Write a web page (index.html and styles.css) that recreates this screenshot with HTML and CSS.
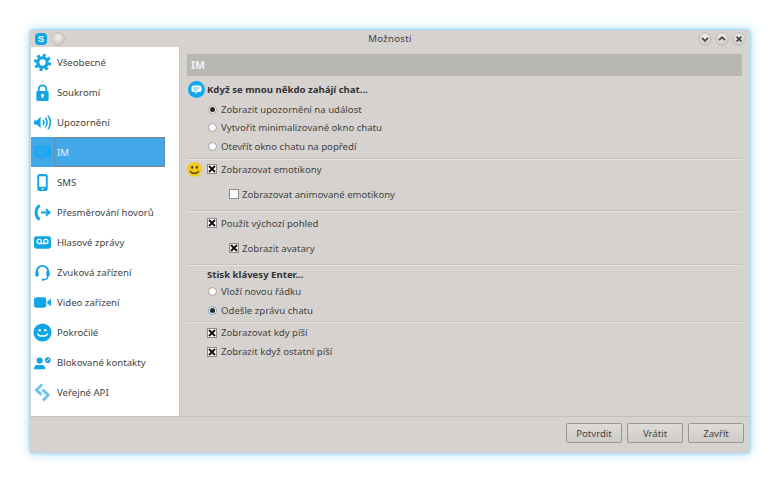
FILE: index.html
```html
<!DOCTYPE html>
<html lang="cs">
<head>
  <meta charset="UTF-8">
  <title>Možnosti</title>
  <link rel="stylesheet" href="styles.css">
</head>
<body>
  <div class="window">
    <div class="titlebar">
      <div class="title-left">
        <svg class="skype-logo" viewBox="0 0 12 12"><rect width="12" height="12" rx="4" fill="#12a5e6"/><text x="6" y="9.4" text-anchor="middle" class="skype-s">S</text></svg>
        <span class="win-btn"></span>
      </div>
      <div class="title-text">Možnosti</div>
      <div class="title-right">
        <span class="win-btn"><svg viewBox="0 0 10 10"><path d="M2.5 4l2.5 2.5L7.5 4" class="win-glyph"/></svg></span>
        <span class="win-btn"><svg viewBox="0 0 10 10"><path d="M2.5 6L5 3.5 7.5 6" class="win-glyph"/></svg></span>
        <span class="win-btn"><svg viewBox="0 0 10 10"><path d="M3 3l4 4M7 3l-4 4" class="win-glyph"/></svg></span>
      </div>
    </div>

    <div class="main">
      <div class="sidebar">
        <div class="nav-item">
          <svg class="nav-icon" viewBox="0 0 20 20"><circle cx="10" cy="10" r="7.6" class="gear-teeth"/><circle cx="10" cy="10" r="5" class="gear-ring"/></svg>
          <span>Všeobecné</span>
        </div>
        <div class="nav-item">
          <svg class="nav-icon" viewBox="0 0 20 20"><path d="M6 9V6.5a4 4 0 0 1 8 0V9" class="line" stroke-width="2"/><rect x="3.5" y="8.5" width="13" height="10.5" rx="1.5" class="fill"/><circle cx="10" cy="13" r="1.6" fill="#fff"/><rect x="9.3" y="13" width="1.4" height="3" fill="#fff"/></svg>
          <span>Soukromí</span>
        </div>
        <div class="nav-item">
          <svg class="nav-icon" viewBox="0 0 20 20"><path d="M1 8h3l4-4v12l-4-4H1z" class="fill"/><path d="M10.5 7.5a4 4 0 0 1 0 5M13 5a8 8 0 0 1 0 10M15.800 3a11 11 0 0 1 0 14" class="line" stroke-width="1.700"/></svg>
          <span>Upozornění</span>
        </div>
        <div class="nav-item selected">
          <svg class="nav-icon" viewBox="0 0 20 20"><path d="M4 3h12a3 3 0 0 1 3 3v6a3 3 0 0 1-3 3h-4l-3 3v-3H4a3 3 0 0 1-3-3V6a3 3 0 0 1 3-3z" class="fill"/><path d="M5 7.500h10M5 10.500h7" stroke="#48ace8" stroke-width="1"/></svg>
          <span class="focus-box">IM</span>
        </div>
        <div class="nav-item">
          <svg class="nav-icon" viewBox="0 0 20 20"><rect x="4.500" y="1" width="11" height="18" rx="2.500" class="fill"/><rect x="6.500" y="3.500" width="7" height="11" fill="#fff"/><circle cx="10" cy="16.700" r="1" fill="#fff"/></svg>
          <span>SMS</span>
        </div>
        <div class="nav-item">
          <svg class="nav-icon" viewBox="0 0 20 20"><path d="M7 2.500C2 6 2 14 7 17.500" class="line" stroke-width="3.200"/><path d="M8.500 10H17M13.500 6.500L17.500 10l-4 3.500" class="line" stroke-width="2"/></svg>
          <span>Přesměrování hovorů</span>
        </div>
        <div class="nav-item">
          <svg class="nav-icon" viewBox="0 0 20 20"><rect x="1" y="3.500" width="18" height="13" rx="2.500" class="fill"/><circle cx="6.500" cy="9" r="2.200" fill="none" stroke="#fff" stroke-width="1.300"/><circle cx="13.500" cy="9" r="2.200" fill="none" stroke="#fff" stroke-width="1.300"/><path d="M6.500 11.200h7" stroke="#fff" stroke-width="1.300"/></svg>
          <span>Hlasové zprávy</span>
        </div>
        <div class="nav-item">
          <svg class="nav-icon" viewBox="0 0 20 20"><path d="M4 12V9a6 6 0 0 1 12 0v3" class="line" stroke-width="2"/><rect x="2.500" y="8.500" width="3.500" height="6" rx="1.500" class="fill"/><rect x="14" y="8.500" width="3.500" height="6" rx="1.500" class="fill"/><path d="M15.500 14c0 2.500-2 3.500-4 3.500" class="line" stroke-width="1.500"/><circle cx="10.500" cy="17.500" r="1.300" class="fill"/></svg>
          <span>Zvuková zařízení</span>
        </div>
        <div class="nav-item">
          <svg class="nav-icon" viewBox="0 0 20 20"><rect x="1" y="4.500" width="13" height="11" rx="2.500" class="fill"/><path d="M15 9l4-3v8l-4-3z" class="fill"/></svg>
          <span>Video zařízení</span>
        </div>
        <div class="nav-item">
          <svg class="nav-icon" viewBox="0 0 20 20"><circle cx="10" cy="10" r="9.500" class="fill"/><circle cx="7" cy="7.500" r="1.300" fill="#fff"/><circle cx="13" cy="7.500" r="1.300" fill="#fff"/><path d="M5 11.500c1 3 9 3 10 0" fill="none" stroke="#fff" stroke-width="1.500" stroke-linecap="round"/></svg>
          <span>Pokročilé</span>
        </div>
        <div class="nav-item">
          <svg class="nav-icon" viewBox="0 0 20 20"><circle cx="7" cy="8" r="3.200" class="fill"/><path d="M1 17c0-3.500 2-4.500 3.500-4.500h5c1.500 0 3.500 1 3.500 4.500z" class="fill"/><circle cx="15.500" cy="7.500" r="3" class="fill"/><path d="M14 9l3-3" stroke="#fff" stroke-width="1"/></svg>
          <span>Blokované kontakty</span>
        </div>
        <div class="nav-item">
          <svg class="nav-icon" viewBox="0 0 20 20"><path d="M9.500 1.500L3.500 7.500l5.500 5" fill="none" stroke="#6cc5f2" stroke-width="3"/><path d="M10 7l6 5.500-5.500 6" fill="none" stroke="#6cc5f2" stroke-width="3"/></svg>
          <span>Veřejné API</span>
        </div>
      </div>

      <div class="content">
        <div class="page-head">IM</div>

        <div class="heading-row">
          <svg class="chat-icon" viewBox="0 0 17 17"><circle cx="8.500" cy="8.500" r="8.500" fill="#12a9ec"/><path d="M5.500 4.500h6a2 2 0 0 1 2 2v2.500a2 2 0 0 1-2 2H9.500L7.500 13v-2h-2a2 2 0 0 1-2-2V6.500a2 2 0 0 1 2-2z" fill="#fff"/><path d="M5.500 7h6M5.500 9h4" stroke="#12a9ec" stroke-width=".8"/></svg>
          <b>Když se mnou někdo zahájí chat...</b>
        </div>
        <div class="opt opt-radio"><span class="radio on"></span>Zobrazit upozornění na událost</div>
        <div class="opt opt-radio"><span class="radio"></span>Vytvořit minimalizované okno chatu</div>
        <div class="opt opt-radio"><span class="radio"></span>Otevřít okno chatu na popředí</div>
        <div class="sep sep-a"></div>

        <div class="opt opt-check smiley-row">
          <svg class="smiley" viewBox="0 0 16 16"><circle cx="8" cy="8" r="7.800" fill="#f7c80f"/><ellipse cx="5.500" cy="5.800" rx="1.100" ry="1.500" fill="#333"/><ellipse cx="10.500" cy="5.800" rx="1.100" ry="1.500" fill="#333"/><path d="M3.500 9.500c1 3.500 8 3.500 9 0" fill="none" stroke="#333" stroke-width="1.100"/></svg>
          <span class="check on"><svg viewBox="0 0 8 8"><path d="M1 1l6 6M7 1l-6 6"/></svg></span>Zobrazovat emotikony
        </div>
        <div class="opt opt-sub"><span class="check"></span>Zobrazovat animované emotikony</div>
        <div class="sep sep-b"></div>

        <div class="opt opt-check"><span class="check on"><svg viewBox="0 0 8 8"><path d="M1 1l6 6M7 1l-6 6"/></svg></span>Použít výchozí pohled</div>
        <div class="opt opt-sub"><span class="check on"><svg viewBox="0 0 8 8"><path d="M1 1l6 6M7 1l-6 6"/></svg></span>Zobrazit avatary</div>
        <div class="sep sep-c"></div>

        <div class="sub-heading"><b>Stisk klávesy Enter...</b></div>
        <div class="opt opt-radio2"><span class="radio"></span>Vloží novou řádku</div>
        <div class="opt opt-radio2"><span class="radio on focused"></span>Odešle zprávu chatu</div>
        <div class="sep sep-d"></div>

        <div class="opt opt-check"><span class="check on"><svg viewBox="0 0 8 8"><path d="M1 1l6 6M7 1l-6 6"/></svg></span>Zobrazovat kdy píší</div>
        <div class="opt opt-check"><span class="check on"><svg viewBox="0 0 8 8"><path d="M1 1l6 6M7 1l-6 6"/></svg></span>Zobrazit když ostatní píší</div>
      </div>
    </div>

    <div class="footer">
      <button class="btn">Potvrdit</button>
      <button class="btn">Vrátit</button>
      <button class="btn">Zavřít</button>
    </div>
  </div>
</body>
</html>
```

FILE: styles.css
```css
html, body {
  margin: 0;
  height: 100%;
}

body {
  background-color: #fff;
  padding: 30px;
  box-sizing: border-box;
  font-family: "Noto Sans", sans-serif;
  font-size: 9.6px;
  color: #444;
  overflow: hidden;
}

.window {
  height: 423px;
  width: 720px;
  display: flex;
  flex-direction: column;
  background-color: #d6d2cf;
  border-radius: 3px;
  box-shadow: 0 0 3px #6cc4f7, 0 0 12px #9ddafc;
}

.titlebar {
  height: 17px;
  display: grid;
  grid-template-columns: 1fr auto 1fr;
  align-items: center;
  padding: 0 5px;
}

.title-left, .title-right {
  display: flex;
  align-items: center;
  gap: 5px;
}

.title-right {
  justify-content: flex-end;
}

.title-text {
  text-align: center;
  letter-spacing: 0.3px;
  color: #444;
}

.skype-logo {
  width: 12px;
  height: 12px;
}

.skype-s {
  font-family: "Liberation Sans", sans-serif;
  font-size: 9px;
  font-weight: bold;
  fill: #fff;
}

.win-btn {
  width: 12px;
  height: 12px;
  border-radius: 50%;
  background: radial-gradient(circle at 50% 35%, #f4f3f2, #bdb9b6);
  box-shadow: 0 0 0 0.5px #a9a5a2;
  display: block;
}

.win-btn svg {
  display: block;
  width: 12px;
  height: 12px;
}

.win-glyph {
  fill: none;
  stroke: #444;
  stroke-width: 1.4;
}

.main {
  height: 369px;
  display: flex;
  border-bottom: 1px solid #c4c0bd;
}

.sidebar {
  width: 148px;
  margin-left: 1px;
  background-color: #fff;
  border-right: 1px solid #c9c5c2;
}

.nav-item {
  height: 30px;
  width: 134px;
  display: flex;
  align-items: center;
  box-sizing: border-box;
  white-space: nowrap;
  color: #3f3f3f;
}

.nav-icon {
  width: 19px;
  height: 19px;
  margin: 0 5px 0 2px;
  flex: none;
}

.fill { fill: #12a5e6; }

.line {
  fill: none;
  stroke: #12a5e6;
}

.gear-teeth {
  fill: none;
  stroke: #12a5e6;
  stroke-width: 3;
  stroke-dasharray: 3 2.97;
}

.gear-ring {
  fill: none;
  stroke: #12a5e6;
  stroke-width: 3.400;
}

.nav-item.selected {
  background-color: #42a8e8;
  color: #e8f4fc;
}

.nav-item.selected .nav-icon {
  margin-right: 2px;
}

.nav-item.selected .fill {
  fill: #1fa6f0;
}

.focus-box {
  flex: 1;
  align-self: stretch;
  display: flex;
  align-items: center;
  padding-left: 2px;
  border: 1px dotted #7d7468;
}

.content {
  flex: 1;
  padding: 7px 8px 0 7px;
}

.page-head {
  height: 22px;
  line-height: 22px;
  background-color: #b9b7b2;
  color: #f3f3f3;
  font-weight: bold;
  font-size: 10.500px;
  padding-left: 4px;
  margin-bottom: 4px;
}

.heading-row {
  height: 18px;
  margin-bottom: 2px;
  display: flex;
  align-items: center;
  color: #333;
}

.chat-icon {
  width: 17px;
  height: 17px;
  margin: 0 2px 0 1px;
}

.opt {
  display: flex;
  align-items: center;
  white-space: nowrap;
}

.opt-radio {
  height: 18.500px;
  padding-left: 21px;
}

.opt-radio2 {
  height: 19px;
  padding-left: 21px;
}

.opt-radio .radio, .opt-radio2 .radio {
  margin-right: 4px;
}

.opt-check {
  height: 19px;
  padding-left: 20px;
}

.opt-sub {
  height: 31px;
  padding-left: 42px;
}

.opt-sub .check {
  margin-right: 3px;
}

.smiley-row {
  position: relative;
}

.smiley {
  position: absolute;
  left: 0;
  top: 2px;
  width: 15px;
  height: 15px;
}

.radio {
  width: 7px;
  height: 7px;
  border-radius: 50%;
  border: 1px solid #a5a19e;
  background-color: #fbfbfb;
  flex: none;
  position: relative;
}

.radio.on::after {
  content: "";
  position: absolute;
  left: 1px;
  top: 1px;
  width: 5px;
  height: 5px;
  border-radius: 50%;
  background-color: #222;
}

.radio.focused {
  border-color: #5b9fc8;
}

.check {
  width: 8px;
  height: 8px;
  border: 1px solid #8f8b88;
  background-color: #fafafa;
  margin-right: 4px;
  flex: none;
  display: block;
}

.check svg {
  display: block;
  width: 8px;
  height: 8px;
}

.check path {
  stroke: #111;
  stroke-width: 2;
  fill: none;
}

.sep {
  background-color: #e6e3e1;
  border-top: 1px solid #c6c2bf;
  box-sizing: border-box;
  height: 2px;
}

.sep-a {
  margin: 2px 0 0;
}

.sep-b {
  margin: 0 0 2px;
}

.sep-d {
  margin: 1px 0 0;
}

.sub-heading {
  height: 16.500px;
  line-height: 18px;
  padding-left: 20px;
  color: #333;
}

.footer {
  flex: 1;
  display: flex;
  justify-content: flex-end;
  align-items: flex-start;
  gap: 5px;
  padding: 6px 6px 0 0;
}

.btn {
  width: 56px;
  height: 20px;
  padding: 0;
  font-family: "Noto Sans", sans-serif;
  font-size: 9.6px;
  color: #444;
  border: 1px solid #9a9693;
  border-radius: 2px;
  background: linear-gradient(#dedbd8, #cfcbc8);
}
```
